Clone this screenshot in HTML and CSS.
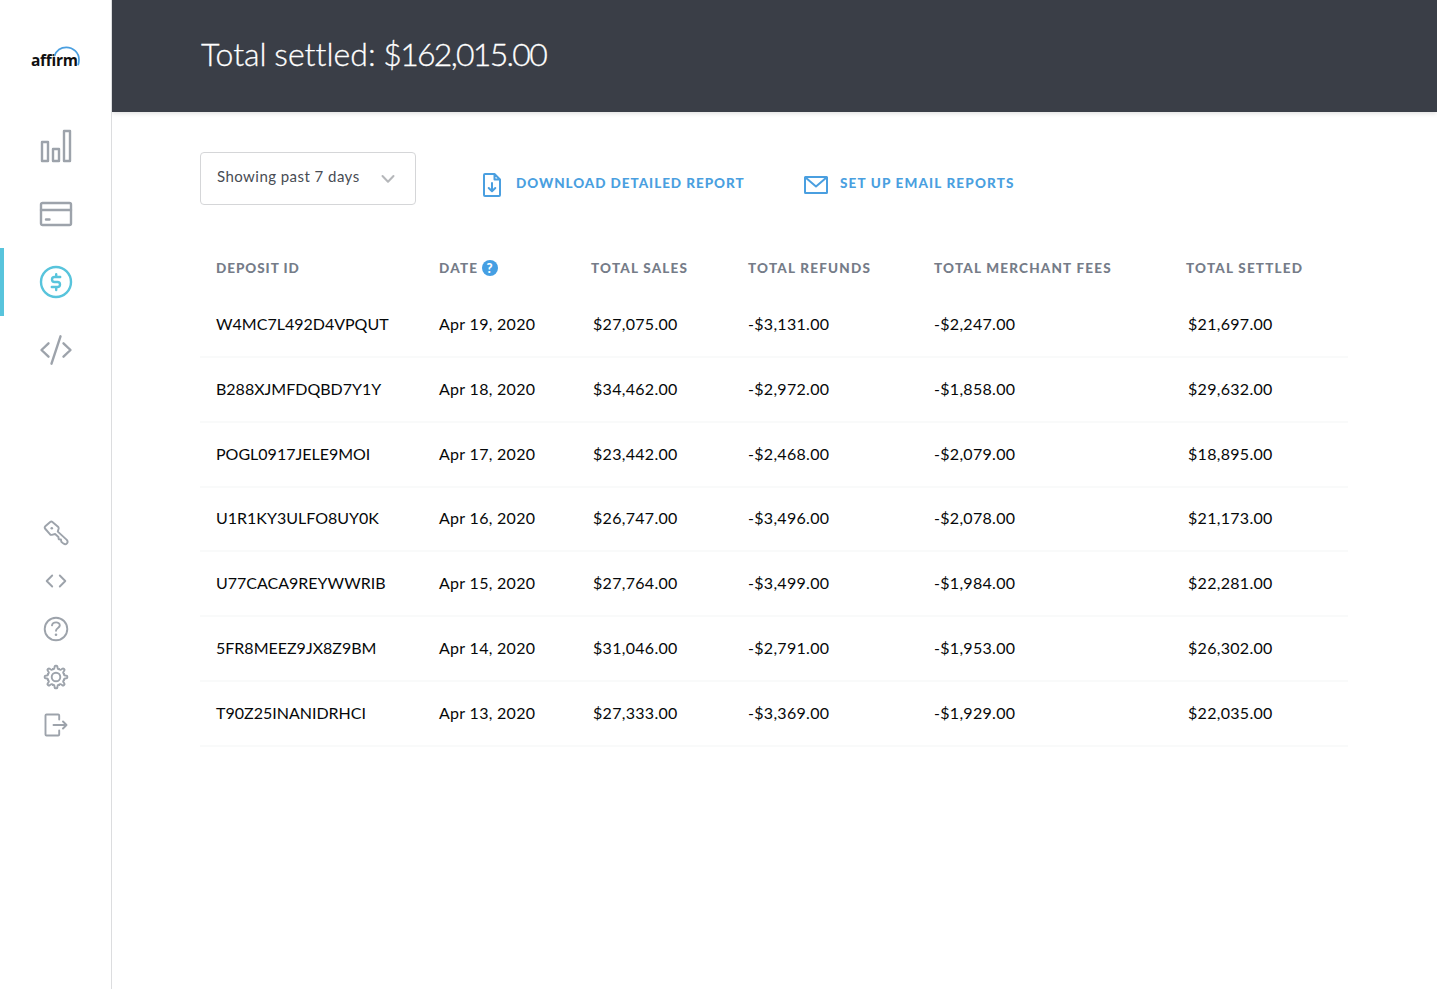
FILE: index.html
```html
<!DOCTYPE html>
<html lang="en">
<head>
    <meta charset="UTF-8">
    <meta name="viewport" content="width=device-width, initial-scale=1.0">
    <title>Affirm - Settlements</title>
    <link rel="stylesheet" href="styles.css">
</head>
<body>

<nav class="sidebar">
    <a class="logo" href="#">
        <span>affirm</span>
        <svg class="logo-arc" width="28" height="21" viewBox="0 0 28 21"><path d="M1.300 10C3.400 4.600 8 1.300 13.300 1.300c7 0 12.700 5.500 12.700 12.300 0 2.100-.3 3.900-.9 5.600"/></svg>
    </a>
    <div class="nav-main">
        <a class="nav-item" href="#">
            <svg width="32" height="34" viewBox="0 0 32 34"><rect x="2" y="13" width="6" height="19"/><rect x="13" y="20" width="6" height="12"/><rect x="24" y="2" width="6" height="30"/></svg>
        </a>
        <a class="nav-item" href="#">
            <svg width="34" height="26" viewBox="0 0 34 26"><rect x="2" y="2" width="30" height="22" rx="1.500"/><path d="M2 9h30M7 18.500h3.500"/></svg>
        </a>
        <a class="nav-item active" href="#">
            <svg width="34" height="34" viewBox="0 0 34 34"><circle cx="17" cy="17" r="15"/><path d="M21.200 12h-5.700a2.500 2.500 0 0 0 0 5h3a2.500 2.500 0 0 1 0 5h-5.700M17.200 9.300V12M17.200 22v3"/></svg>
        </a>
        <a class="nav-item" href="#">
            <svg width="34" height="32" viewBox="0 0 34 32"><path d="M9.500 9.300L2.500 16l7 6.700M24.500 9.300l7 6.700-7 6.700M21.500 2.300l-9 27.400"/></svg>
        </a>
    </div>
    <div class="nav-secondary">
        <a class="nav-item" href="#">
            <svg width="26" height="26" viewBox="0 0 26 26"><path d="M2.300 6.300L7.200 2c.8-.6 1.500-.6 2.200 0l5.600 4.700c.6.600.8 1.200.6 2l-.8 2.900 9 8.300c2.100 2.500-.7 5.600-3.300 3.700L18.300 21.700l-.4-2.200-2.200-.3-.3-2.200-3.300-3-3.300.8c-.8.200-1.400 0-1.900-.7L2 8.500c-.5-.9-.5-1.500.3-2.200z"/><circle class="dot" cx="8.800" cy="8.300" r="1.300"/></svg>
        </a>
        <a class="nav-item" href="#">
            <svg width="26" height="26" viewBox="0 0 26 26"><path d="M9.200 7.500L3.700 13l5.500 5.500M16.800 7.500l5.500 5.500-5.500 5.500"/></svg>
        </a>
        <a class="nav-item" href="#">
            <svg width="26" height="26" viewBox="0 0 26 26"><circle cx="13" cy="13" r="11.300"/><path d="M9 9.400c.5-4 8-4 7.800 0-.1 2.600-3.800 2.500-3.800 5.400"/><circle class="dot" cx="13" cy="18.700" r="1.300"/></svg>
        </a>
        <a class="nav-item" href="#">
            <svg width="26" height="26" viewBox="0 0 26 26">
                <defs><path id="tooth" d="M-3.300-7.900c1 .3 1.700-.3 1.800-1.400l.1-1q.1-1 1-1h.8q.9 0 1 1l.1 1c.1 1.100.8 1.700 1.800 1.400"/></defs>
                <g transform="translate(13 13)">
                    <use href="#tooth"/>
                    <use href="#tooth" transform="rotate(45)"/>
                    <use href="#tooth" transform="rotate(90)"/>
                    <use href="#tooth" transform="rotate(135)"/>
                    <use href="#tooth" transform="rotate(180)"/>
                    <use href="#tooth" transform="rotate(225)"/>
                    <use href="#tooth" transform="rotate(270)"/>
                    <use href="#tooth" transform="rotate(315)"/>
                    <circle r="4.300"/>
                </g>
            </svg>
        </a>
        <a class="nav-item" href="#">
            <svg width="26" height="26" viewBox="0 0 26 26"><path d="M16.200 7.500V3.500q0-1-1-1H3.500q-1 0-1 1v19q0 1 1 1h11.700q1 0 1-1v-4M10.500 13h13M20 9.500l3.500 3.500-3.500 3.500"/></svg>
        </a>
    </div>
</nav>

<div class="page">
    <header class="header">
        <h1>Total settled: <span class="amount">$162,015.00</span></h1>
    </header>

    <main class="content">
        <div class="toolbar">
            <button class="select">
                <span>Showing past 7 days</span>
                <svg width="14" height="10" viewBox="0 0 14 10"><path d="M1.500 2L7 7.800 12.500 2"/></svg>
            </button>
            <a class="action download" href="#">
                <svg width="20" height="26" viewBox="0 0 20 26"><path d="M2 3q0-1 1-1h9.500L18 7.500V23q0 1-1 1H3q-1 0-1-1zM12.500 2v5.500H18M10 11v8M6.700 16l3.300 3.300 3.300-3.300"/></svg>
                <span>DOWNLOAD DETAILED REPORT</span>
            </a>
            <a class="action email" href="#">
                <svg width="26" height="20" viewBox="0 0 26 20"><rect x="2" y="2" width="22" height="16" rx=".5"/><path d="M2.500 2.500L13 11.500l10.500-9"/></svg>
                <span>SET UP EMAIL REPORTS</span>
            </a>
        </div>

        <table class="deposits">
            <colgroup>
                <col class="col-id">
                <col class="col-date">
                <col class="col-sales">
                <col class="col-refunds">
                <col class="col-fees">
                <col class="col-settled">
            </colgroup>
            <thead>
                <tr>
                    <th>DEPOSIT ID</th>
                    <th>DATE <span class="help">?</span></th>
                    <th>TOTAL SALES</th>
                    <th>TOTAL REFUNDS</th>
                    <th>TOTAL MERCHANT FEES</th>
                    <th>TOTAL SETTLED</th>
                </tr>
            </thead>
            <tbody>
                <tr><td>W4MC7L492D4VPQUT</td><td>Apr 19, 2020</td><td>$27,075.00</td><td>-$3,131.00</td><td>-$2,247.00</td><td>$21,697.00</td></tr>
                <tr><td>B288XJMFDQBD7Y1Y</td><td>Apr 18, 2020</td><td>$34,462.00</td><td>-$2,972.00</td><td>-$1,858.00</td><td>$29,632.00</td></tr>
                <tr><td>POGL0917JELE9MOI</td><td>Apr 17, 2020</td><td>$23,442.00</td><td>-$2,468.00</td><td>-$2,079.00</td><td>$18,895.00</td></tr>
                <tr><td>U1R1KY3ULFO8UY0K</td><td>Apr 16, 2020</td><td>$26,747.00</td><td>-$3,496.00</td><td>-$2,078.00</td><td>$21,173.00</td></tr>
                <tr><td>U77CACA9REYWWRIB</td><td>Apr 15, 2020</td><td>$27,764.00</td><td>-$3,499.00</td><td>-$1,984.00</td><td>$22,281.00</td></tr>
                <tr><td>5FR8MEEZ9JX8Z9BM</td><td>Apr 14, 2020</td><td>$31,046.00</td><td>-$2,791.00</td><td>-$1,953.00</td><td>$26,302.00</td></tr>
                <tr><td>T90Z25INANIDRHCI</td><td>Apr 13, 2020</td><td>$27,333.00</td><td>-$3,369.00</td><td>-$1,929.00</td><td>$22,035.00</td></tr>
            </tbody>
        </table>
    </main>
</div>

</body>
</html>
```

FILE: styles.css
```css
* {
    box-sizing: border-box;
}
body {
    font-family: Lato, 'Liberation Sans', sans-serif;
    display: flex;
    min-height: 100vh;
    margin: 0;
    background: #fff;
    color: #060809;
}
a {
    text-decoration: none;
}
svg {
    display: block;
    fill: none;
    stroke: currentColor;
    stroke-width: 2;
    stroke-linecap: round;
    stroke-linejoin: round;
}
svg .dot {
    fill: currentColor;
    stroke: none;
}

/* sidebar */
.sidebar {
    position: relative;
    z-index: 1;
    width: 112px;
    flex-shrink: 0;
    border-right: 1px solid #dcdddf;
    background: #fff;
}
.logo {
    display: block;
    position: relative;
    width: 50px;
    height: 24px;
    margin: 46px 0 0 31px;
    color: #101010;
    font-family: 'Open Sans', sans-serif;
    font-size: 15.5px;
    font-weight: 700;
    line-height: 28px;
    letter-spacing: -0.3px;
}
.logo-arc {
    position: absolute;
    top: 0;
    left: 22px;
    color: #4a9fe0;
    stroke-width: 1.7;
    stroke-linecap: butt;
}
.nav-main {
    margin-top: 42px;
}
.nav-item {
    display: flex;
    align-items: center;
    justify-content: center;
    color: #9da3ab;
}
.nav-main .nav-item {
    height: 68px;
    border-left: 4px solid transparent;
    padding-right: 3px;
}
.nav-main svg {
    stroke-width: 2.4;
}
.nav-main .active {
    color: #58c4dc;
    border-left-color: #58c4dc;
}
.nav-secondary {
    margin-top: 125px;
}
.nav-secondary .nav-item {
    height: 48px;
}
.nav-secondary svg {
    stroke-width: 1.9;
}

/* header */
.page {
    flex: 1;
}
.header {
    height: 112px;
    padding: 34px 0 0 89px;
    background: #3a3e47;
    color: #fff;
    box-shadow: 0 1px 5px rgba(0, 0, 0, 0.15);
}
.header h1 {
    margin: 0;
    font-size: 32px;
    font-weight: 300;
    line-height: 40px;
    font-variant-ligatures: none;
    word-spacing: -1px;
    -webkit-text-stroke: 0.3px #fff;
}
.amount {
    letter-spacing: -1.7px;
}

/* toolbar */
.content {
    padding: 40px 88px 0;
}
.toolbar {
    display: flex;
    height: 53px;
}
.select {
    display: flex;
    align-items: flex-start;
    justify-content: space-between;
    width: 216px;
    padding: 13px 20px 0 16px;
    border: 1px solid #d5d6d8;
    border-radius: 4px;
    background: #fff;
    color: #484c54;
    font-family: inherit;
    font-size: 15px;
    line-height: 20px;
    letter-spacing: 0.45px;
}
.select svg {
    margin-top: 8px;
    color: #b5b7ba;
}
.action {
    display: flex;
    align-items: center;
    height: 24px;
    margin-top: 21px;
    color: #4a9fe0;
    font-size: 13.5px;
    font-weight: 900;
    letter-spacing: 0.95px;
    white-space: nowrap;
}
.action span {
    margin-top: -4px;
}
.download {
    width: 321px;
    margin-left: 66px;
    gap: 14px;
}
.email {
    gap: 11px;
    letter-spacing: 1.15px;
}

/* deposits */
.deposits {
    width: 1148px;
    margin-top: 39px;
    border-collapse: separate;
    border-spacing: 0;
    table-layout: fixed;
    text-align: left;
}
.col-id { width: 223px; }
.col-date { width: 152px; }
.col-sales { width: 157px; }
.col-refunds { width: 186px; }
.col-fees { width: 252px; }
.col-settled { width: 178px; }
.deposits th {
    height: 49px;
    padding: 0 0 1px 16px;
    color: #757c88;
    font-size: 13.5px;
    font-weight: 900;
    line-height: 16px;
    letter-spacing: 1.2px;
    white-space: nowrap;
}
.deposits th:first-child {
    letter-spacing: 0.95px;
}
.deposits td {
    height: 64.85px;
    padding: 0 0 2px 16px;
    border-bottom: 2px solid #f9fafa;
    font-size: 16px;
    letter-spacing: 0.3px;
    white-space: nowrap;
}
.deposits td:first-child {
    letter-spacing: 0;
}
.deposits td:nth-child(3),
.deposits td:nth-child(6) {
    padding-left: 18px;
}
.help {
    display: inline-block;
    width: 16px;
    height: 16px;
    margin: -3px 0 -3px -1px;
    border-radius: 50%;
    background: #459fe3;
    color: #fff;
    font-size: 13px;
    line-height: 16px;
    letter-spacing: 0;
    text-align: center;
}
```
